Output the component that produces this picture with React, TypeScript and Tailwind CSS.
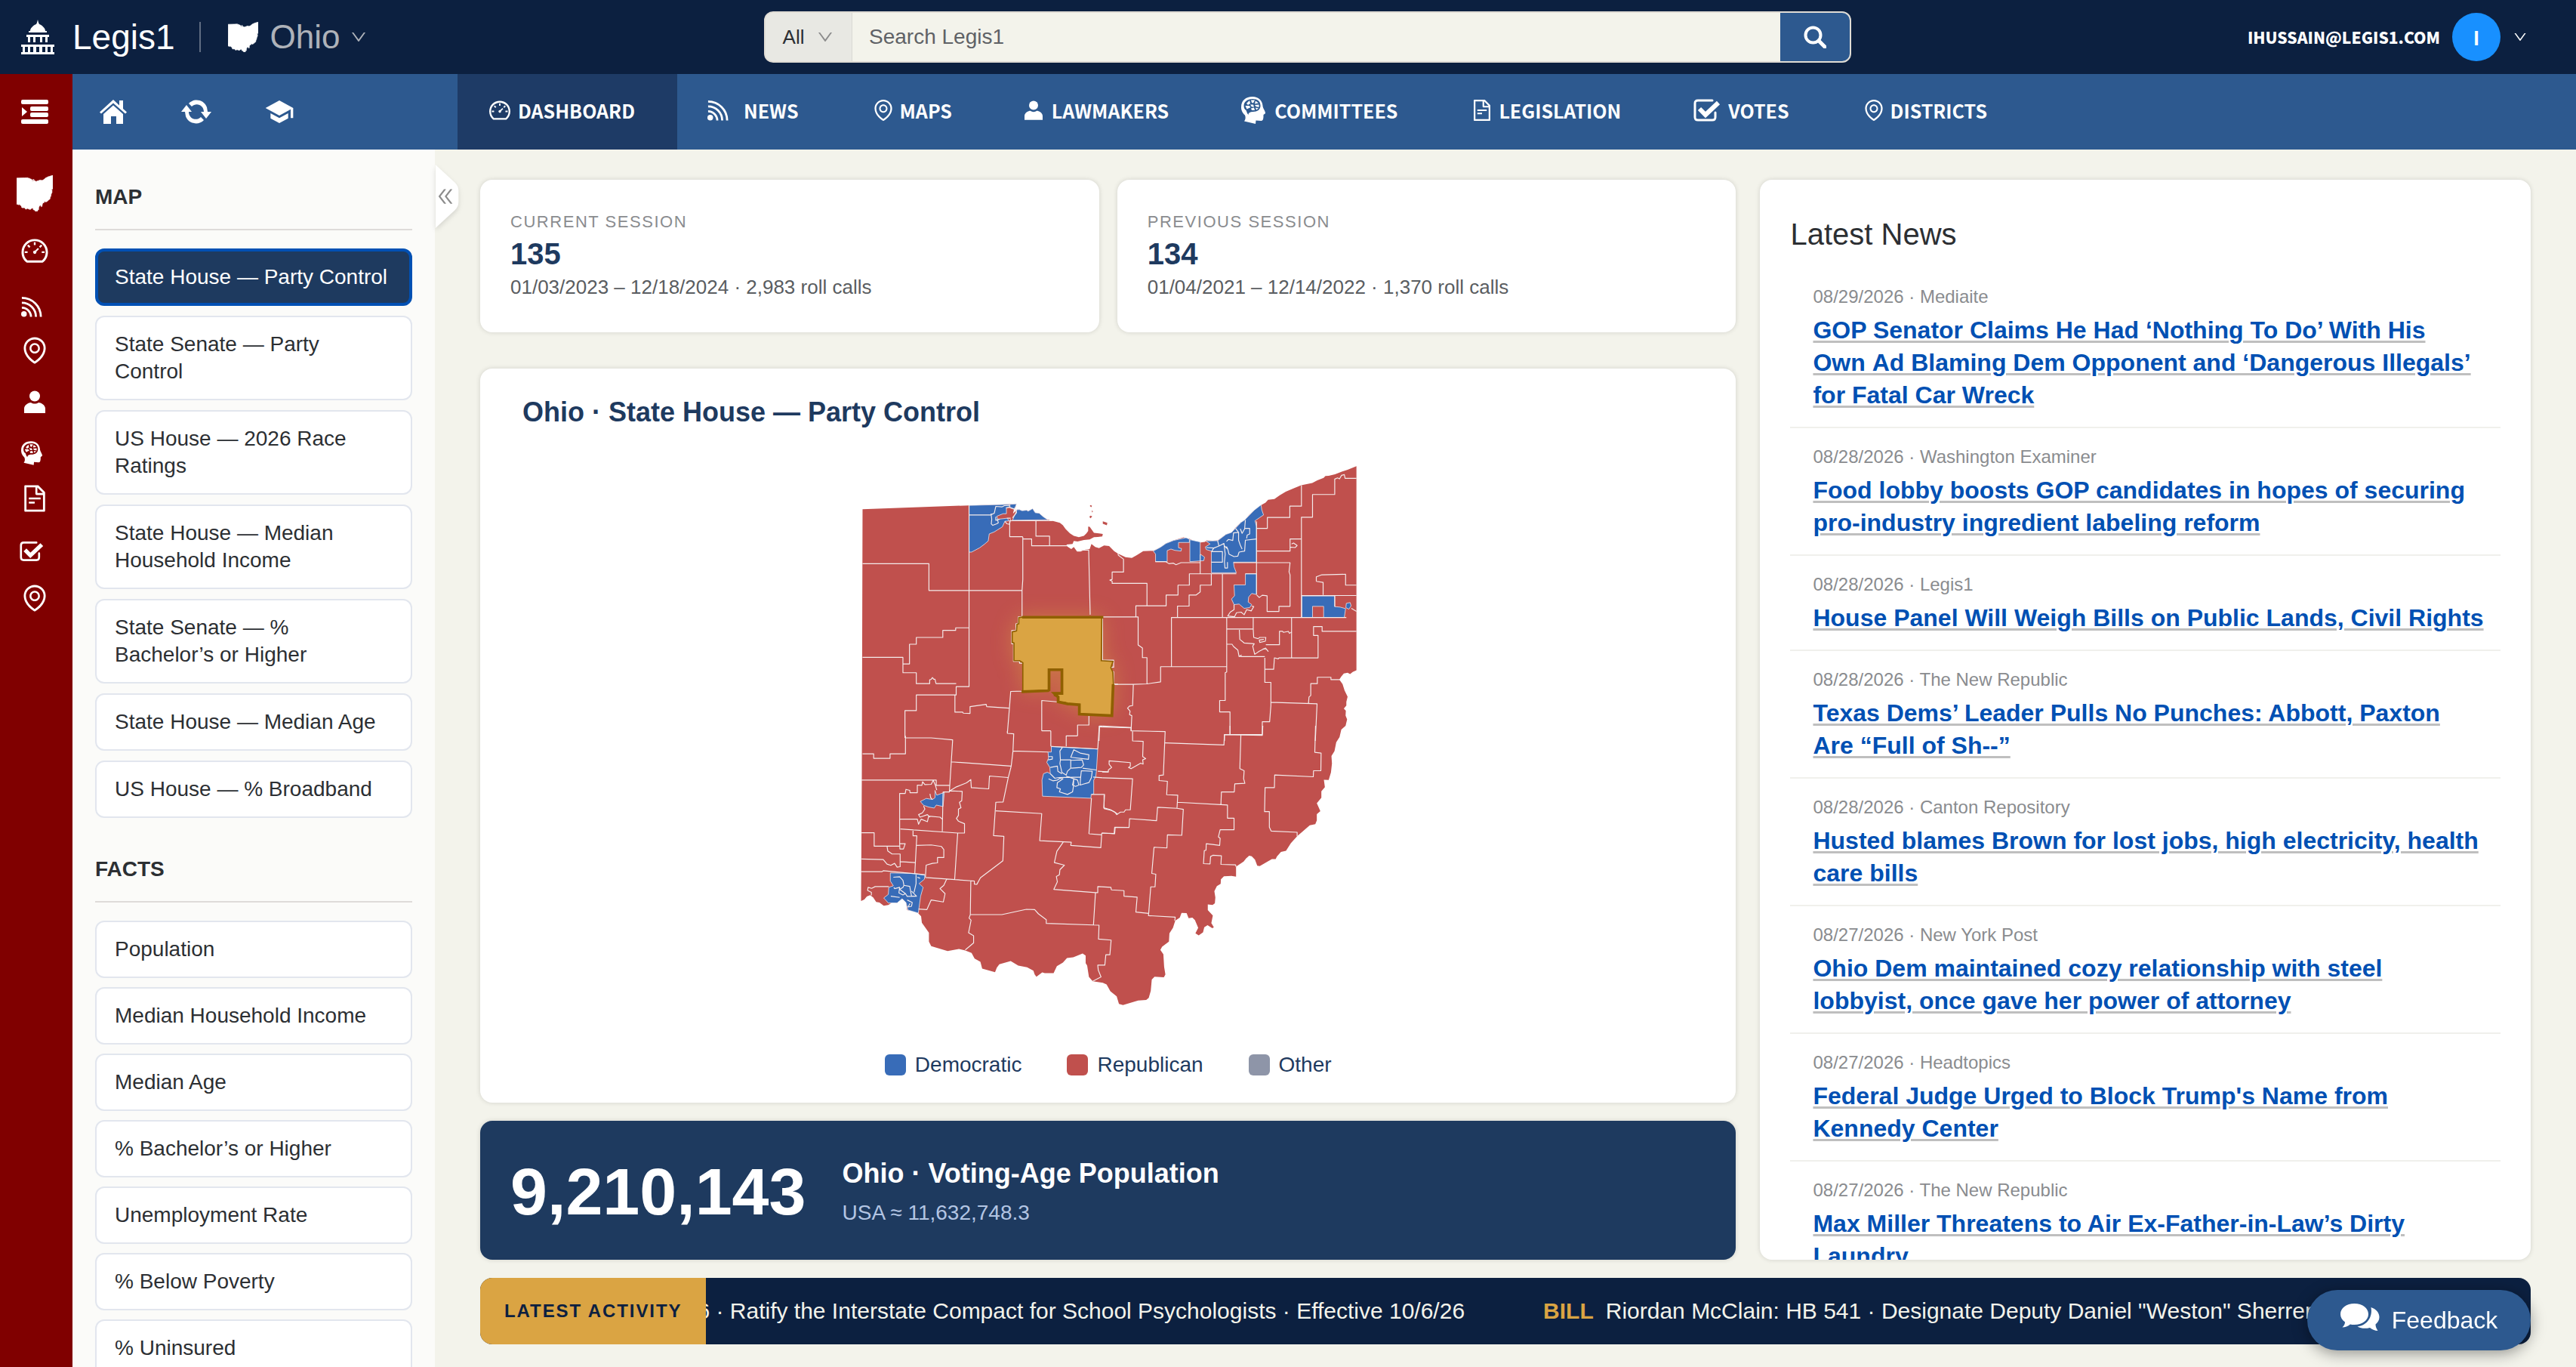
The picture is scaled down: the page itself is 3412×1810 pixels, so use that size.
import type { ReactNode } from "react";
import {
  AiOutlineDashboard,
  AiOutlineDoubleLeft,
  AiOutlineDown,
  AiOutlineEnvironment,
  AiOutlineFileText,
} from "react-icons/ai";
import { MdSchool } from "react-icons/md";

type IconProps = { className?: string };

// state outline, also used for the small state logos
const OHIO =
  "M68 222 490 207 678 201 674 214 668 224 664 240 680 224 690 224 700 228 718 226 724 230 742 220 752 236 768 238 784 252 802 264 822 269 850 276 862 286 872 300 890 318 905 328 925 333 945 328 955 318 962 308 962 291 968 292 985 316 1005 318 1020 320 1018 330 1000 332 985 333 968 342 945 344 920 350 905 348 900 360 876 362 880 370 895 380 905 372 918 390 932 390 950 382 968 380 975 360 990 372 1005 376 1025 366 1045 368 1065 388 1080 398 1110 412 1135 415 1155 404 1180 388 1220 387 1250 372 1270 358 1300 346 1340 334 1364 340 1385 350 1408 354 1425 352 1430 346 1455 347 1475 346 1490 335 1508 322 1530 314 1545 296 1568 274 1582 265 1600 245 1620 226 1645 207 1665 196 1675 185 1700 182 1720 168 1745 153 1775 140 1806 127 1850 118 1870 108 1895 98 1902 91 1915 90 1940 84 1965 74 1990 66 2025 52 2025 860 2010 867 2000 875 1990 870 1975 873 1965 885 1957 897 1970 915 1978 940 1990 965 1985 985 1985 1000 1975 1012 1983 1020 1982 1040 1988 1055 1982 1080 1965 1095 1958 1125 1945 1145 1938 1180 1926 1200 1928 1230 1924 1265 1915 1295 1896 1294 1900 1323 1886 1340 1886 1365 1868 1387 1882 1418 1868 1430 1868 1455 1862 1470 1840 1474 1790 1518 1765 1545 1746 1575 1726 1580 1710 1598 1705 1608 1690 1608 1660 1625 1642 1636 1632 1634 1623 1610 1610 1597 1600 1595 1588 1605 1578 1618 1548 1638 1548 1678 1530 1675 1500 1676 1488 1688 1487 1706 1472 1715 1462 1735 1466 1760 1464 1783 1455 1790 1436 1788 1436 1810 1456 1832 1450 1862 1460 1878 1454 1882 1435 1870 1422 1878 1417 1898 1400 1910 1387 1902 1398 1880 1385 1850 1375 1840 1360 1842 1352 1822 1332 1821 1325 1840 1307 1852 1298 1880 1284 1902 1282 1935 1255 1955 1248 1968 1260 1985 1263 2035 1268 2065 1262 2076 1225 2074 1214 2085 1210 2130 1202 2158 1192 2166 1160 2168 1100 2186 1084 2182 1075 2152 1050 2132 1035 2105 1020 2098 980 2092 965 2075 958 2030 952 2020 952 1990 940 1982 903 1997 878 2000 862 2018 838 2032 825 2060 790 2060 780 2057 757 2074 750 2065 745 2050 720 2037 685 2030 655 2012 610 2025 600 2038 593 2056 542 2042 535 2015 512 2002 500 1980 475 1970 450 1964 405 1972 340 1953 331 1935 331 1900 303 1860 300 1835 288 1822 270 1815 245 1810 240 1780 225 1765 212 1772 205 1782 185 1780 170 1790 152 1793 135 1780 122 1778 110 1760 98 1751 85 1756 75 1768 62 1774 65 1300Z";

const HIGHLIGHT =
  "M703 649H1016L1014 822 1060 825 1052 850 1060 868 1062 915 1056 1039 927 1034V995H880L870 987H843V966L828 960V950H858V858H807V938L703 945V830L690 822H668V752L661 750V708L678 704 680 678 687 676V652Z";

function OhioShape({ className }: IconProps) {
  return (
    <svg viewBox="62 50 1966 2138" preserveAspectRatio="none" className={className} aria-hidden="true">
      <path d={OHIO} fill="currentColor" stroke="currentColor" strokeWidth="30" />
    </svg>
  );
}

function CapitolIcon({ className }: IconProps) {
  return (
    <svg viewBox="0 0 44 46" fill="currentColor" className={className} aria-hidden="true">
      <path d="M22 0l1 4 1 2c5 2 8 6 8 9h2v2H10v-2h2c0-3 3-7 8-9l1-2z" />
      <path d="M7 20h30v3h-2v7h-3v-7h-4v7h-3v-7h-6v7h-3v-7h-4v7H9v-7H7z" />
      <path d="M0 33h44v3h-2v7h2v3H0v-3h2v-7H0zm5 3v7h4v-7zm7 0v7h4v-7zm8 0v7h4v-7zm8 0v7h4v-7zm7 0v7h4v-7z" fillRule="evenodd" />
    </svg>
  );
}

function IndentIcon({ className }: IconProps) {
  return (
    <svg viewBox="0 0 36 32" fill="currentColor" className={className} aria-hidden="true">
      <rect width="36" height="6" rx="2" />
      <rect x="12" y="9" width="24" height="6" rx="2" />
      <rect x="12" y="17" width="24" height="6" rx="2" />
      <rect y="26" width="36" height="6" rx="2" />
      <path d="M1 10l7 6-7 6z" />
    </svg>
  );
}

function HomeIcon({ className }: IconProps) {
  return (
    <svg viewBox="0 0 36 32" fill="currentColor" className={className} aria-hidden="true">
      <path d="M18 0l8 7.500V1h5v11l5 4.500-2 2L18 4.500 2 18.500l-2-2z" />
      <path d="M18 7.500l13 11.500v13h-9V22h-7v10H5V19z" />
    </svg>
  );
}

function CycleIcon({ className }: IconProps) {
  return (
    <svg viewBox="0 0 40 32" fill="currentColor" className={className} aria-hidden="true">
      <path d="M10 5C16-2 30-1 34 10l1 6h5l-7 9-7-9h4c0-9-10-13-16-7z" />
      <path d="M30 27C24 34 10 33 6 22l-1-6H0l7-9 7 9h-4c0 9 10 13 16 7z" />
    </svg>
  );
}

function RssIcon({ className }: IconProps) {
  return (
    <svg viewBox="0 0 30 29" fill="none" stroke="currentColor" strokeWidth="3" className={className} aria-hidden="true">
      <circle cx="4" cy="25" r="4" fill="currentColor" stroke="none" />
      <path d="M1 2C16 2 28 14 28 29M1 9c11 0 20 9 20 20M1 16c7 0 13 6 13 13" />
    </svg>
  );
}

function PersonIcon({ className }: IconProps) {
  return (
    <svg viewBox="0 0 28 30" fill="currentColor" className={className} aria-hidden="true">
      <circle cx="14" cy="7.500" r="7" />
      <path d="M0 30v-6c0-5 6-8 9-8 3 2 7 2 10 0 3 0 9 3 9 8v6z" />
    </svg>
  );
}

function HeadIcon({ className }: IconProps) {
  return (
    <svg viewBox="0 0 32 36" fill="currentColor" className={className} aria-hidden="true">
      <path
        fillRule="evenodd"
        d="M15 0c8 0 13 5 13.500 12 0 3 3.500 7 3.500 9.500 0 1.500-2 1.500-2.500 2.500 0 4 0 8-3 8l-7-.500-.500 4.500L4 32.500c2-3 2-5 1-8C1 21 0 17 0 14 0 5 6 0 15 0zM15 3C8 3 3.500 7 3.500 12c0 3 1 5 3 6 1 2 1 4 3 6 0-3 3-4 6-4 6 0 10-3 10-8 0-6-4-9-10.500-9z"
      />
      <path d="M7 9l4-4 1 4-3 2zM13 4.500l5 0-2 4-2-.500zM19 5.500l4 3-5 1zM5.500 12l5 0 2 2-5 2.500zM12 10.500l4 0 1 3-3 0zM18 11l5.500-.500v3.500l-4-1zM13 15.500l4-1 1 3.500-4 0zM19 14.500l4 1-3 2z" />
    </svg>
  );
}

function VoteIcon({ className }: IconProps) {
  return (
    <svg viewBox="0 0 36 30" fill="none" stroke="currentColor" className={className} aria-hidden="true">
      <path d="M25 2H6C3 2 2 3 2 6v18c0 3 1 4 4 4h19c3 0 4-1 4-4v-6" strokeWidth="3" strokeLinecap="round" />
      <path d="M8 13l8 8L33 5" strokeWidth="6" />
    </svg>
  );
}

function SearchIcon({ className }: IconProps) {
  return (
    <svg viewBox="0 0 30 30" fill="none" stroke="currentColor" strokeWidth="4" className={className} aria-hidden="true">
      <circle cx="12.500" cy="12.500" r="10" />
      <path d="M20 20l8 8" strokeLinecap="round" strokeWidth="5" />
    </svg>
  );
}

function ChatIcon({ className }: IconProps) {
  return (
    <svg viewBox="0 0 52 37" fill="currentColor" className={className} aria-hidden="true">
      <path d="M18.500 0C29 0 37 6 37 14s-8 14-18.500 14c-2 0-4 0-5.500-.500C10 30 6 31.500 2.500 31.500 5 29 6 27 6 24.500 2 22 0 18 0 14 0 6 8 0 18.500 0z" />
      <path d="M40.500 5C47 7 51.500 12 51.500 18c0 4-2 7-5 9.500 0 3 1 5.500 3 8.500-4 0-8-2-10.500-4-6 1.500-12 1-16.500-1.500C35 29 43 18 40.500 5z" />
    </svg>
  );
}

type NavItem = { label: string; icon: ReactNode; slot: string };

const NAV: NavItem[] = [
  { label: "DASHBOARD", icon: <AiOutlineDashboard className="size-8" />, slot: "w-10" },
  { label: "NEWS", icon: <RssIcon className="h-7 w-7" />, slot: "w-12" },
  { label: "MAPS", icon: <AiOutlineEnvironment className="size-8" />, slot: "w-[38px]" },
  { label: "LAWMAKERS", icon: <PersonIcon className="h-7 w-6" />, slot: "w-9" },
  { label: "COMMITTEES", icon: <HeadIcon className="h-9 w-8" />, slot: "w-11" },
  { label: "LEGISLATION", icon: <AiOutlineFileText className="size-8" />, slot: "w-[38px]" },
  { label: "VOTES", icon: <VoteIcon className="h-[30px] w-9" />, slot: "w-[46px]" },
  { label: "DISTRICTS", icon: <AiOutlineEnvironment className="size-8" />, slot: "w-[38px]" },
];

const RAIL: { label: string; icon: ReactNode; gap: string }[] = [
  { label: "Ohio", icon: <OhioShape className="size-12" />, gap: "mt-[68px]" },
  { label: "Dashboard", icon: <AiOutlineDashboard className="size-10" />, gap: "mt-8" },
  { label: "News", icon: <RssIcon className="mr-2 size-7" />, gap: "mt-10" },
  { label: "Maps", icon: <AiOutlineEnvironment className="size-10" />, gap: "mt-6" },
  { label: "Lawmakers", icon: <PersonIcon className="h-8 w-7" />, gap: "mt-8" },
  { label: "Committees", icon: <HeadIcon className="mr-2 h-8 w-7" />, gap: "mt-9" },
  { label: "Legislation", icon: <AiOutlineFileText className="size-10" />, gap: "mt-6" },
  { label: "Votes", icon: <VoteIcon className="mr-2 h-7 w-8" />, gap: "mt-9" },
  { label: "Districts", icon: <AiOutlineEnvironment className="size-10" />, gap: "mt-7" },
];

const MAP_VIEWS = [
  "State House — Party Control",
  "State Senate — Party Control",
  "US House — 2026 Race Ratings",
  "State House — Median Household Income",
  "State Senate — % Bachelor’s or Higher",
  "State House — Median Age",
  "US House — % Broadband",
];

const FACTS = [
  "Population",
  "Median Household Income",
  "Median Age",
  "% Bachelor’s or Higher",
  "Unemployment Rate",
  "% Below Poverty",
  "% Uninsured",
];

const SESSIONS = [
  { title: "Current Session", number: "135", detail: "01/03/2023 – 12/18/2024 · 2,983 roll calls" },
  { title: "Previous Session", number: "134", detail: "01/04/2021 – 12/14/2022 · 1,370 roll calls" },
];

const NEWS = [
  { meta: "08/29/2026 · Mediaite", title: "GOP Senator Claims He Had ‘Nothing To Do’ With His Own\u00a0Ad Blaming Dem Opponent and ‘Dangerous Illegals’ for Fatal Car Wreck" },
  { meta: "08/28/2026 · Washington Examiner", title: "Food lobby boosts GOP candidates in hopes of securing pro-industry ingredient labeling reform" },
  { meta: "08/28/2026 · Legis1", title: "House Panel Will Weigh Bills on Public Lands, Civil Rights" },
  { meta: "08/28/2026 · The New Republic", title: "Texas Dems’ Leader Pulls No Punches: Abbott, Paxton Are “Full of Sh--”" },
  { meta: "08/28/2026 · Canton Repository", title: "Husted blames Brown for lost jobs, high electricity, health care bills" },
  { meta: "08/27/2026 · New York Post", title: "Ohio Dem maintained cozy relationship with steel lobbyist, once gave her power of attorney" },
  { meta: "08/27/2026 · Headtopics", title: "Federal Judge Urged to Block Trump's Name from Kennedy Center" },
  { meta: "08/27/2026 · The New Republic", title: "Max Miller Threatens to Air Ex-Father-in-Law’s Dirty Laundry" },
];

function Header() {
  return (
    <header className="flex h-[98px] shrink-0 items-center bg-[#0c2040] pr-16 pl-7 text-white">
      <div className="flex flex-1 items-center">
        <CapitolIcon className="h-[46px] w-11" />
        <span className="ml-6 text-[46px] leading-none">Legis1</span>
        <span className="ml-8 h-10 w-[2px] bg-[#5f6c82]" />
        <OhioShape className="ml-9 size-10" />
        <button type="button" className="ml-4 flex items-center gap-3 text-[44px] leading-none text-[#aeb2b9]">
          Ohio
          <AiOutlineDown className="size-6" />
        </button>
      </div>
      <form className="ml-22 flex h-[68px] w-[1440px] overflow-hidden rounded-xl border-2 border-[#e0dcd5] bg-[#f3f3eb]">
        <button type="button" className="flex w-[115px] items-center justify-center gap-4 border-r border-[#d9d9d4] bg-[#e8e8e3] text-[26px] text-[#2c2f33]">
          All
          <AiOutlineDown className="size-6 text-[#8c8c8c]" />
        </button>
        <input
          type="search"
          aria-label="Search Legis1"
          placeholder="Search Legis1"
          className="min-w-0 flex-1 bg-transparent px-[22px] text-[28px] text-[#2c2f33] placeholder:text-[#5f6266]"
        />
        <button type="submit" aria-label="Search" className="flex w-[92px] items-center justify-center bg-[#2d598f]">
          <SearchIcon className="size-[30px]" />
        </button>
      </form>
      <div className="flex flex-1 items-center justify-end gap-4">
        <span className="font-['Noto_Sans_CJK_SC',sans-serif] text-[21px] leading-8 font-black">IHUSSAIN@LEGIS1.COM</span>
        <span className="flex size-16 items-center justify-center rounded-full bg-[#1890ff] font-['Noto_Sans_CJK_SC',sans-serif] text-[26px] leading-8 font-bold">
          I
        </span>
        <AiOutlineDown className="size-5" />
      </div>
    </header>
  );
}

function Rail() {
  return (
    <aside className="flex w-24 shrink-0 flex-col items-center bg-[#800000] pt-[34px] pr-1 text-white">
      <button type="button" aria-label="Toggle menu">
        <IndentIcon className="h-8 w-9" />
      </button>
      {RAIL.map((item) => (
        <a key={item.label} href="#" aria-label={item.label} className={item.gap}>
          {item.icon}
        </a>
      ))}
    </aside>
  );
}

function NavBar() {
  return (
    <nav className="flex h-[100px] shrink-0 bg-[#2d598f] text-white">
      <div className="flex w-[510px] shrink-0 items-center gap-[70px] pl-[34px]">
        <a href="#" aria-label="Home">
          <HomeIcon className="h-8 w-10" />
        </a>
        <a href="#" aria-label="Refresh">
          <CycleIcon className="h-8 w-10" />
        </a>
        <a href="#" aria-label="Learn">
          <MdSchool className="size-10" />
        </a>
      </div>
      {NAV.map((item, i) => (
        <a
          key={item.label}
          href="#"
          className={`flex items-center pr-14 pb-1 pl-10 font-['Noto_Sans_CJK_SC',sans-serif] text-[25px] leading-9 font-bold ${
            i === 0 ? "bg-[#1e3b66]" : ""
          }`}
        >
          <span className={`flex ${item.slot}`}>{item.icon}</span>
          {item.label}
        </a>
      ))}
    </nav>
  );
}

function SideSection({ title, items, active, gap }: { title: string; items: string[]; active?: number; gap: string }) {
  return (
    <section>
      <h2 className="border-b-2 border-[#dedbd9] pb-6 text-[28px] leading-9 font-bold">{title}</h2>
      <div className={`mt-6 flex flex-col ${gap}`}>
        {items.map((item, i) => (
          <button
            key={item}
            type="button"
            className={
              i === active
                ? "rounded-xl border-4 border-[#0050b3] bg-[#1e3a5f] px-[22px] py-4 text-left text-[28px] leading-9 text-white"
                : "rounded-xl border-2 border-[#e2e6ee] bg-white px-6 py-[18px] text-left text-[28px] leading-9"
            }
          >
            {item}
          </button>
        ))}
      </div>
    </section>
  );
}

function DistrictMap() {
  return (
    <svg viewBox="54 48 1974 2142" className="h-full w-full" role="img" aria-label="Ohio state house districts by party">
      <defs>
        <clipPath id="state">
          <path d={OHIO} />
        </clipPath>
        <filter id="glow" x="-50%" y="-50%" width="200%" height="200%">
          <feGaussianBlur stdDeviation="42" />
        </filter>
      </defs>
      <path d={OHIO} fill="#c0504d" />
      <path d="M970 206l7 2-2 6-6-4zM977 226l4 6-4 3zM970 248l8 2-6 8-5-4zM1020 270l18 6-2 10-16-6z" fill="#c0504d" />

      <g fill="#386cb8" stroke="#fff" strokeWidth="2">
        {/* Toledo */}
        <path d="M490 207 650 203V215L638 217V240H625L600 250 604 262 640 258 650 268 632 270 622 292 590 312 570 320 566 348 552 360 532 375 500 392H490ZM652 203 678 201 674 212 668 222 652 217ZM662 266 680 224 690 224 700 228 718 226 724 230 742 220 752 236 768 238 784 252 802 264Z" />
        {/* Cleveland, Akron, Youngstown */}
        <path
          transform="translate(1020 0)"
          d="M200 388 230 372 250 358 280 346 330 335 343 341V354H300V375L312 378 310 388 285 385 270 380 255 386V430H209V400ZM345 343 386 352V400L403 412 400 426 345 430ZM408 348 455 347 488 322 510 314 548 274 562 265 600 226 627 205 630 225 637 245 622 255 603 268 609 290V432H518L520 450 529 474H430V388L410 382 406 372 425 360ZM565 478H609V560L590 556 578 570 576 590 590 600 582 612 560 615 540 598 520 600 510 578 522 565 520 522H565ZM789 566H919V608L940 610 962 616 957 651H875V607H831V651H789ZM965 595 980 592 984 605 975 618 963 612Z"
        />
        {/* Columbus, Dayton, Cincinnati */}
        <path
          transform="translate(0 1080)"
          d="M816 82 1000 92 995 175 992 202 984 215V270L974 272 973 287 781 279 779 215 785 190 800 184 812 190 810 165 798 145 805 128 803 104H816ZM297 300 320 288 345 292 355 285 355 256 362 275 392 264 387 320 360 314 352 326 330 322 310 315ZM178 583 270 585 315 592 313 608 292 625 308 640 298 675 289 742 248 730 240 700 225 685 205 702 170 702 152 682 170 668 172 640 190 634 178 615Z"
        />
      </g>

      <g clipPath="url(#state)">
        <path d={HIGHLIGHT} fill="#daa443" opacity="0.5" filter="url(#glow)" />
      </g>

      <g fill="none" stroke="#f4ecec" strokeWidth="3.500" strokeLinejoin="round">
        <path d="M68 438H331V544H700M490 207V925H439V958H281V1020H236V1128M490 692H437V702H386V730H281V757H254V835H228M68 809H228V870H281V913H334V898L340 896 345 889 350 896 355 896 359 913H439M434 958V1026L465 1026 467 1030 494 1031V1004L558 995 560 1004 648 1010M703 332V500L700 544V649H685V676H676V703H659V755H666V825H690V832H703V943L655 944 650 1010 642 1108M651 268V331H703M703 340H738V367H880M755 268V329H809V367M655 268H822M935 384H964L970 640M1019 649V820H1063V848H1054V866H1063V915H1080M778 1100V980L838 985M778 1100H814M965 1040V1077H920V1120M1005 1140 1007 1081 1020 1081" />
        <path d="M490 245H575L590 238 596 211 620 213 630 208 650 207M577 240 580 262 578 280 584 286 600 280 606 276 602 262M640 258 655 258M596 252 596 266 612 262M632 270 640 280 650 282 655 262M636 217 650 214 676 224 678 236 662 256" />
        <path
          transform="translate(1020 0)"
          d="M60 398 62 405 82 420V471H37V500L28 503 37 507V516H175V605M131 649V605H251V562H298V523H343V478H529M430 478V523H386V550L370 562H342V606H296V649M386 400V478M208 430H250L262 438 280 436 290 442 310 434H386M0 649H140V760L157 772V810H175V914M45 916H120L175 914 229 906V846H490M272 846V651H965M474 478V651M491 651V867L485 870V980H463V1025H504V1115M121 916 118 1000 106 1002 98 1010 108 1022 106 1036 115 1040 112 1100M0 1081 112 1087M482 1140V1115H632V1064H661L666 1000V908H642V811M545 806H642M642 856H677L680 811 695 815 698 811H853V722H835V687H869V706H1005M748 651V811M666 987 849 993 842 1140M815 991 817 966 824 960V913H850V888H904V897H940M491 697H596V651M596 697 598 730 615 735 622 730 646 730 644 745 622 750 620 740 638 738M646 759H700V706H712L716 710 735 706 740 714 748 708M541 700 543 738 560 752 600 755 594 765 602 797 620 785 645 772 655 785 650 778 634 775M491 757H512L518 766 535 780 540 806 550 800M609 434V560M609 434H742L738 470 742 482V607H698V627H651V565L632 563 620 572 610 562M609 270V434M609 298H652V255H741V210H787V127M787 652V254H831V164H919V103L930 98 938 102 946 88 957 85 960 100H1005M609 388H742V340H787M742 372 762 374 770 366 756 356 748 360M518 434H609M565 478H609M590 606 598 608 588 625 570 620 560 640 548 630 530 632 522 648 495 645 505 630 520 620V600M787 564H1005M846 508 846 490 868 482 962 480V523H1005M846 508 873 512V562M919 564V608M985 615 1005 627"
        />
        <path
          transform="translate(1020 0)"
          d="M430 390H474V432H430M455 347 460 368 440 376 410 374M440 376 432 388M460 368 480 358 485 400 482 430 484 455 494 455 494 432M480 366 495 380 500 400 520 410 535 408 540 392 562 388 565 345 609 340M490 350 498 342 515 346 518 316 538 314 526 298M538 314V345L545 365 552 380M545 300 552 318 562 300 565 265M562 298H582V320L572 325 570 338M495 380 490 370"
        />
        <path
          transform="translate(0 1080)"
          d="M68 111H112V129H177V111H238V40M238 48H340L425 56 412 262H387M64 215H360V236H412M421 143 657 160 664 100 667 32 642 30V20M664 100 803 104M814 82V20M816 82 1000 92M875 82V40H920M657 160 645 207 625 302 596 303 587 435 628 438 624 535 535 602 521 628 511 627V615L317 601M645 205 571 199 568 250 499 245 497 213 480 226 440 242 413 258 463 260 461 297 452 303 458 325 448 330V355L440 367 448 378 472 388V425L445 425 218 409M215 467V268H237L240 252 255 256 256 265H285V235L303 236 306 222 315 233 340 232 348 216 356 234 362 255M215 370H285L290 390 300 370 325 380 330 358 375 362 384 370M387 262 384 418M310 318 315 330 305 345 290 352 296 362 325 352 335 362M64 424H114V477H215M215 467 216 488 230 488 237 467H215M165 477 168 496 185 508 217 508V558L205 560 195 545 180 553 165 548 150 530 64 528M217 538 277 542M62 578H145L150 574 315 590M268 411V436H283L275 585M283 474 340 472 380 478 390 490V522H365V543L345 545 320 552 317 601M445 425 433 608M401 608 390 632 375 645 395 665 388 698 340 690 323 728 290 726M497 615 495 748 490 762 498 770 488 820 508 832V860L475 888M495 748H620L717 727 750 728 765 745 796 768V783L1005 790 1003 845 1053 849 1048 907 1032 907 1028 948 1000 948 1002 968 1013 995 980 1012M596 337 778 348 770 455 895 461 893 474 1012 483 1016 425M863 461 838 497 828 542 868 552 850 570 848 590 836 597 840 618 826 648 991 661 983 788M991 661H1000V637L1052 640 1054 650 1104 653V675L1156 679 1151 738 1201 743M965 428 1016 432M965 428 975 287M975 272H1027L1024 325 1050 332 1080 350M1016 425 1067 428 1069 402M982 203 1020 206M1000 180 1042 183M1000 92 1006 0M172 637H118L104 644 90 640 88 652 103 660V672"
        />
        <path
          transform="translate(0 1080)"
          d="M860 85 850 100 852 135 850 150 858 185 875 195 880 180 893 168V135H852M905 95 893 125 963 133 965 115 930 108ZM893 137 938 135 944 155 935 165 895 168M940 168 995 175M935 178 932 205 930 235 940 232 965 225 975 205 978 180ZM805 210 822 218 840 215 850 208 862 210 840 225 838 245 852 250 848 262 880 272 900 262 903 245 905 210 875 200M812 190 830 208 845 205 932 203M905 210 900 235 912 240 925 235 920 215ZM803 135 820 132 820 122 805 122M812 165 840 160 842 180 858 190"
        />
        <path
          transform="translate(0 1080)"
          d="M190 600 215 598 228 612 232 632 255 636 262 675 280 675M192 640 195 645 215 640 212 662 228 670 238 665 215 648 228 640 232 632M238 665 245 676 282 675 262 655M280 590 280 625 272 660M245 690 265 700 262 715 248 718 256 704M285 600 296 604M180 675 215 680M335 270 338 285 345 292"
        />
        <path
          transform="translate(1020 1080)"
          d="M-14 4 112 8V20L247 23 240 195 223 197V217L256 220 253 273 297 275 294 327 217 323 213 376 106 368 104 403 47 402 45 427 -4 425M118 20V60L160 62 158 122 170 130 158 135 160 152 150 148 112 170 102 165 109 160V146L25 139 25 152 35 165 22 175V183H-2M0 206 118 210 109 333H90L84 342 70 342 55 352 48 342 36 336 5 328V275M247 68 480 76 482 35 632 38 634 0M504 0V35M547 38 543 170 560 178 558 210 563 228 523 230 521 262 470 262 468 311M297 303 494 314V366H520V412L465 412 458 440 465 446 463 474 435 470 410 467 409 493 402 495 399 546 425 547 427 518 436 513 470 515 468 549 526 551 528 558M294 327 319 331 313 434 256 432 254 484 203 481 194 585 210 588 207 638 190 638 181 752 287 758 285 772M843 0 840 105 865 108 864 178H835L834 202 681 195 680 245H643L641 340H660V402L667 417 770 422V438"
        />
      </g>

      <path d={HIGHLIGHT} fill="#daa443" stroke="#8f6000" strokeWidth="5" />
      <path
        d="M700 650H1022M698 945 803 941 807 938V858H858V952H828L843 966V985L880 993 927 997V1034L1056 1040 1061 915"
        fill="none"
        stroke="#8f6000"
        strokeWidth="11"
      />
    </svg>
  );
}

function LegendItem({ color, label }: { color: string; label: string }) {
  return (
    <li className="flex items-center gap-3">
      <span className={`size-7 rounded-md ${color}`} />
      {label}
    </li>
  );
}

function LatestNews() {
  return (
    <section className="flex min-h-0 flex-col overflow-hidden rounded-2xl bg-white px-10 pt-12 shadow-[0_0_6px_rgba(0,0,0,0.14)]">
      <h2 className="shrink-0 text-[40px] leading-12 text-[#2c2f33]">Latest News</h2>
      <ul className="mt-[21px]">
        {NEWS.map((item) => (
          <li key={item.title} className="border-b-2 border-[#f0f0ec] py-5 pr-5 pl-[30px]">
            <p className="text-[24px] leading-9 text-[#8a8c8f]">{item.meta}</p>
            <h3 className="mt-[5px] text-[32px] leading-[43px] font-bold">
              <a href="#" className="text-[#0050b3] underline decoration-[#bfbfbf] decoration-[3px] underline-offset-[3px]">
                {item.title}
              </a>
            </h3>
          </li>
        ))}
      </ul>
    </section>
  );
}

function Ticker() {
  return (
    <div className="flex h-[88px] shrink-0 overflow-hidden rounded-2xl bg-[#0c2040] text-[30px] leading-10 text-[#f3f3eb]">
      <div className="flex shrink-0 items-center bg-[#daa443] px-8 text-[24px] font-bold tracking-[0.08em] text-[#0c2040]">
        LATEST ACTIVITY
      </div>
      <div className="min-w-0 flex-1 overflow-hidden">
        <div className="-ml-3 flex h-full items-center gap-[104px] whitespace-nowrap">
          <span>6 · Ratify the Interstate Compact for School Psychologists · Effective 10/6/26</span>
          <span>
            <b className="mr-4 text-[#daa443]">BILL</b>
            Riordan McClain: HB 541 · Designate Deputy Daniel "Weston" Sherrer
          </span>
        </div>
      </div>
    </div>
  );
}

export default function App() {
  return (
    <div className="flex h-screen flex-col overflow-hidden bg-[#f3f3eb] font-['Liberation_Sans',Arial,sans-serif] text-[#2c2f33]">
      <Header />
      <div className="flex min-h-0 flex-1">
        <Rail />
        <div className="flex min-w-0 flex-1 flex-col">
          <NavBar />
          <div className="flex min-h-0 flex-1">
            <div className="relative w-[480px] shrink-0 bg-[#fbfbf9]">
              <div className="flex h-full flex-col gap-[50px] overflow-hidden px-[30px] pt-[45px]">
                <SideSection title="MAP" items={MAP_VIEWS} active={0} gap="gap-[13px]" />
                <SideSection title="FACTS" items={FACTS} gap="gap-3" />
              </div>
              <button
                type="button"
                aria-label="Collapse sidebar"
                className="absolute top-5 left-full flex h-[84px] w-8 items-center text-[#8c8c8c]"
              >
                <svg viewBox="0 0 32 88" className="absolute inset-0 h-full w-full overflow-visible drop-shadow-md" aria-hidden="true">
                  <path d="M0 0 27 25Q32 30 32 36V52Q32 58 27 63L0 88Z" fill="#fff" />
                </svg>
                <AiOutlineDoubleLeft className="relative size-7" />
              </button>
            </div>

            <main className="flex min-w-0 flex-1 flex-col gap-6 px-[60px] pt-10 pb-[30px]">
              <div className="grid min-h-0 flex-1 grid-cols-[minmax(0,1.63fr)_minmax(0,1fr)] gap-8">
                <div className="flex min-h-0 flex-col">
                  <div className="grid grid-cols-2 gap-6">
                    {SESSIONS.map((session) => (
                      <section key={session.number} className="rounded-2xl bg-white px-10 pt-10 pb-[42px] shadow-[0_0_6px_rgba(0,0,0,0.14)]">
                        <h2 className="text-[22px] leading-8 tracking-[0.07em] text-[#8a8c8f] uppercase">{session.title}</h2>
                        <p className="text-[40px] leading-[52px] font-bold text-[#1e3a5f]">{session.number}</p>
                        <p className="text-[26px] leading-9 text-[#5a5d61]">{session.detail}</p>
                      </section>
                    ))}
                  </div>

                  <section className="mt-12 flex min-h-0 flex-1 flex-col rounded-2xl bg-white pt-[34px] pb-8 shadow-[0_0_6px_rgba(0,0,0,0.14)]">
                    <h2 className="px-14 text-[36px] leading-12 font-bold text-[#1e3a5f]">Ohio · State House — Party Control</h2>
                    <div className="min-h-0 flex-1 pt-[46px] pb-[60px]">
                      <DistrictMap />
                    </div>
                    <ul className="flex justify-center gap-[60px] text-[28px] leading-9 text-[#1e3a5f]">
                      <LegendItem color="bg-[#386cb8]" label="Democratic" />
                      <LegendItem color="bg-[#c0504d]" label="Republican" />
                      <LegendItem color="bg-[#8e95a8]" label="Other" />
                    </ul>
                  </section>

                  <section className="mt-6 flex h-[184px] shrink-0 items-center gap-12 rounded-2xl bg-[#1e3a5f] px-10 pt-1 text-white shadow-[0_0_6px_rgba(0,0,0,0.14)]">
                    <p className="text-[88px] leading-none font-bold">9,210,143</p>
                    <div>
                      <h2 className="text-[36px] leading-12 font-bold">Ohio · Voting-Age Population</h2>
                      <p className="mt-2 text-[28px] leading-10 text-[#b3c5e3]">USA ≈ 11,632,748.3</p>
                    </div>
                  </section>
                </div>

                <LatestNews />
              </div>
              <Ticker />
            </main>
          </div>
        </div>
      </div>

      <button
        type="button"
        className="fixed right-[60px] bottom-[22px] flex h-20 w-[296px] items-center justify-center gap-4 rounded-full bg-[#2d598f] text-[32px] text-white shadow-[0_4px_20px_rgba(0,0,0,0.4)]"
      >
        <ChatIcon className="mb-2 h-[37px] w-[52px]" />
        Feedback
      </button>
    </div>
  );
}
